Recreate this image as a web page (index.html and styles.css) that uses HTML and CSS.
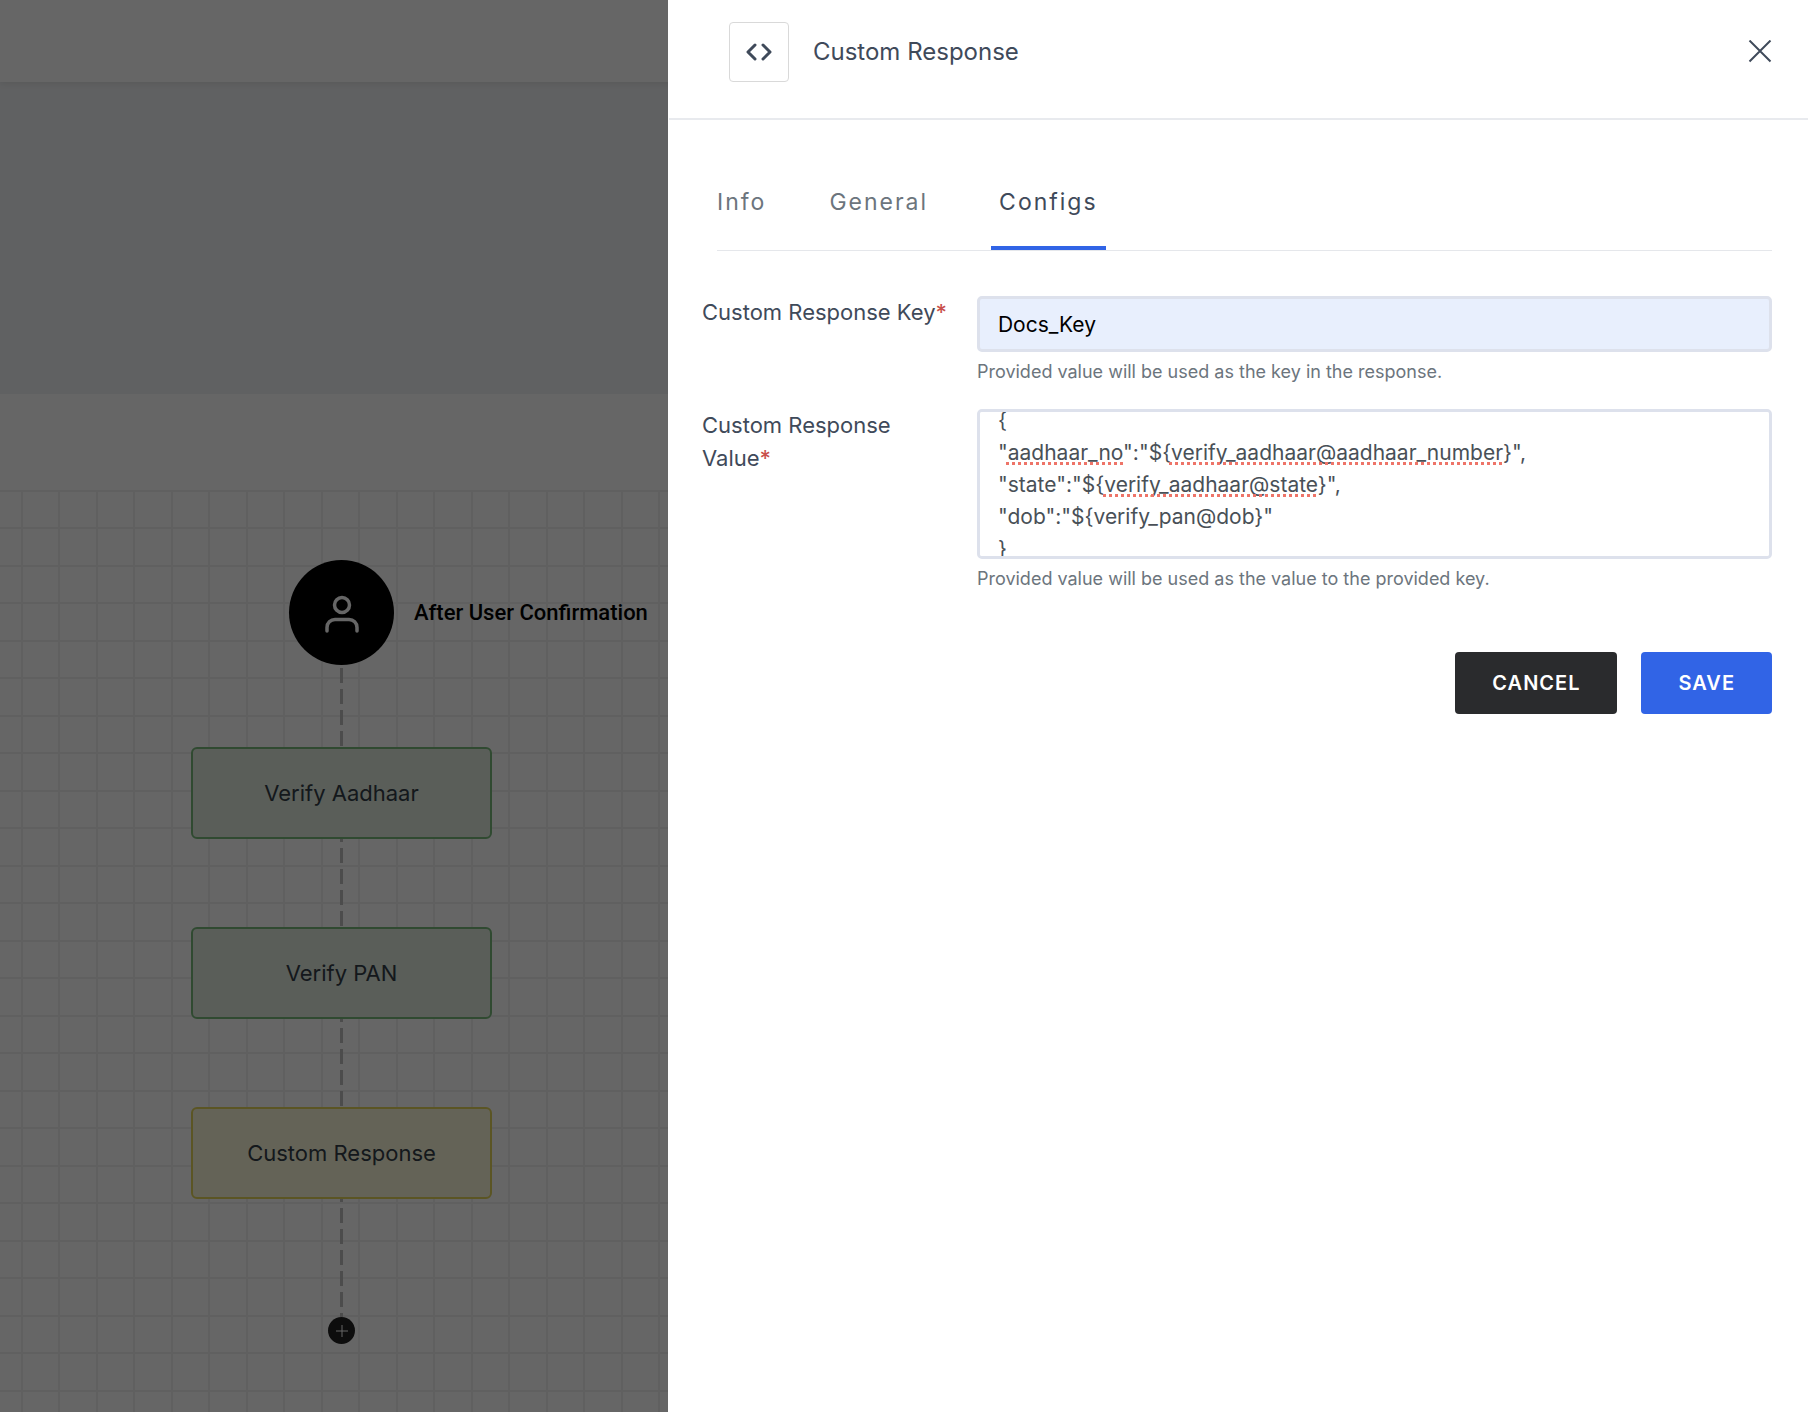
FILE: index.html
```html
<!DOCTYPE html>
<html lang="en">
<head>
<meta charset="utf-8">
<meta name="viewport" content="width=device-width, initial-scale=1">
<title>Custom Response</title>
<link rel="stylesheet" href="styles.css">
</head>
<body>
<div class="page">
  <div class="topbar"></div>
  <div class="banner"></div>
  <div class="toolbar"></div>
  <main class="canvas">
    <div class="flow">
      <div class="start">
        <svg class="start-icon" viewBox="0 0 36 40" aria-hidden="true">
          <circle cx="18" cy="12" r="7.500"/>
          <path d="M3 38v-3.500a8 8 0 0 1 8-8h14a8 8 0 0 1 8 8V38"/>
        </svg>
        <span class="start-label">After User Confirmation</span>
      </div>
      <div class="link link-first"></div>
      <div class="node node-done">Verify Aadhaar</div>
      <div class="link"></div>
      <div class="node node-done">Verify PAN</div>
      <div class="link"></div>
      <div class="node node-current">Custom Response</div>
      <div class="link link-last"></div>
      <button class="add" type="button" aria-label="Add step">
        <svg viewBox="0 0 12 12" aria-hidden="true"><path d="M6 0v12M0 6h12"/></svg>
      </button>
    </div>
  </main>
</div>
<div class="overlay"></div>
<aside class="drawer" role="dialog" aria-labelledby="drawer-title">
  <header class="drawer-header">
    <span class="drawer-icon">
      <svg viewBox="0 0 26 18" aria-hidden="true"><path d="M9 2 2 9l7 7M17 2l7 7-7 7"/></svg>
    </span>
    <h1 class="drawer-title" id="drawer-title">Custom Response</h1>
    <button class="close" type="button" aria-label="Close">
      <svg viewBox="0 0 24 24" aria-hidden="true"><path d="M1.500 0.500l21 21M22.500 0.500l-21 21"/></svg>
    </button>
  </header>
  <nav class="tabs">
    <a class="tab" href="#info">Info</a>
    <a class="tab" href="#general">General</a>
    <a class="tab tab-active" href="#configs" aria-current="page">Configs</a>
  </nav>
  <form class="form">
    <div class="row">
      <label class="label" for="key">Custom Response Key<span class="required">*</span></label>
      <div class="field">
        <input class="control input" id="key" type="text" value="Docs_Key">
        <p class="help">Provided value will be used as the key in the response.</p>
      </div>
    </div>
    <div class="row">
      <label class="label" for="value">Custom Response Value<span class="required">*</span></label>
      <div class="field">
        <div class="editor">
          <textarea class="control textarea" id="value" spellcheck="false">{
"aadhaar_no":"${verify_aadhaar@aadhaar_number}",
"state":"${verify_aadhaar@state}",
"dob":"${verify_pan@dob}"
}</textarea>
          <span class="typo typo-field"></span>
          <span class="typo typo-number"></span>
          <span class="typo typo-state"></span>
        </div>
        <p class="help">Provided value will be used as the value to the provided key.</p>
      </div>
    </div>
    <div class="actions">
      <button class="btn btn-dark" type="button">CANCEL</button>
      <button class="btn btn-primary" type="submit">SAVE</button>
    </div>
  </form>
</aside>
<script src="script.js"></script>
</body>
</html>
```
FILE: styles.css
```css
* { box-sizing: border-box; }

body {
  margin: 0;
  font-family: Inter, "Liberation Sans", sans-serif;
  color: #3f4a5a;
}

/* Workflow page behind the drawer */
.page {
  display: flex;
  flex-direction: column;
  min-height: 100vh;
  background: #fff;
}
.topbar {
  height: 82px;
  box-shadow: 0 2px 6px rgba(0, 0, 0, 0.08);
  z-index: 1;
}
.banner { height: 312px; background: #f0f2f4; }
.toolbar { height: 96px; }
.canvas {
  flex: 1;
  padding: 70px 0 68px 191px;
  background-color: #fff;
  background-image:
    linear-gradient(to right, #f0f0f0 2px, transparent 2px 37px, #f0f0f0 37px 39px, transparent 39px),
    linear-gradient(to bottom, #f0f0f0 2px, transparent 2px 37px, #f0f0f0 37px 39px, transparent 39px);
  background-size: 75px 75px;
  background-position: 21px 0;
}
.flow {
  display: flex;
  flex-direction: column;
  align-items: center;
  width: 301px;
}
.start {
  position: relative;
  display: flex;
  align-items: center;
  justify-content: center;
  width: 105px;
  height: 105px;
  border-radius: 50%;
  background: #000;
}
.start-icon {
  width: 36px;
  height: 40px;
  fill: none;
  stroke: #fff;
  stroke-width: 3.500;
  stroke-linecap: round;
}
.start-label {
  position: absolute;
  left: 125px;
  font: 500 22px/24px Roboto, sans-serif;
  color: #000;
  white-space: nowrap;
}
.link {
  width: 3px;
  height: 88px;
  background: repeating-linear-gradient(to bottom, #bfbfbf 0 3px, transparent 3px 9px, #bfbfbf 9px 21px);
}
.link-first {
  height: 82px;
  background: repeating-linear-gradient(to bottom, transparent 0 3px, #bfbfbf 3px 18px, transparent 18px 21px);
}
.link-last { height: 118px; }
.node {
  display: flex;
  align-items: center;
  justify-content: center;
  width: 301px;
  height: 92px;
  border: 2px solid;
  border-radius: 6px;
  font-size: 22px;
  color: #333d47;
}
.node-done { background: #e0ebde; border-color: #78ba7c; }
.node-current { background: #faf8da; border-color: #e3d55a; }
.add {
  display: flex;
  align-items: center;
  justify-content: center;
  width: 27px;
  height: 27px;
  padding: 0;
  border: 0;
  border-radius: 50%;
  background: #212121;
}
.add svg { width: 12px; height: 12px; stroke: #fff; stroke-width: 1; }

.overlay {
  position: fixed;
  inset: 0;
  z-index: 2;
  background: rgba(0, 0, 0, 0.6);
}

/* Drawer */
.drawer {
  box-sizing: content-box;
  position: fixed;
  top: 0;
  right: 0;
  bottom: 0;
  z-index: 3;
  width: 63%;
  border-left: 1px solid #fff;
  background: #fff;
  overflow-y: auto;
}
.drawer-header {
  display: flex;
  align-items: center;
  gap: 24px;
  padding: 22px 36px 36px 60px;
  border-bottom: 2px solid #e8eaee;
}
.drawer-icon {
  display: flex;
  align-items: center;
  justify-content: center;
  width: 60px;
  height: 60px;
  border: 1px solid #d9d9d9;
  border-radius: 4px;
}
.drawer-icon svg {
  width: 26px;
  height: 18px;
  fill: none;
  stroke: #3f4a5a;
  stroke-width: 3;
  stroke-linecap: round;
  stroke-linejoin: round;
}
.drawer-title { margin: 0; font-size: 24px; line-height: 32px; font-weight: 400; }
.close {
  display: flex;
  margin-left: auto;
  padding: 0;
  border: 0;
  background: none;
}
.close svg { width: 24px; height: 24px; fill: none; stroke: #3f4a5a; stroke-width: 2; }

.tabs {
  display: flex;
  gap: 63px;
  margin: 64px 36px 0 48px;
  border-bottom: 1px solid #e5e7eb;
}
.tab {
  height: 66px;
  font-size: 23px;
  line-height: 36px;
  letter-spacing: 2px;
  color: #6c757d;
  text-decoration: none;
}
.tab-active {
  padding: 0 8px;
  border-bottom: 4px solid #3164e6;
  color: #3f4a5a;
}

.form { padding: 45px 36px 36px 33px; }
.row {
  display: grid;
  grid-template-columns: 251px 1fr;
  column-gap: 24px;
  margin-bottom: 25px;
}
.label { font-size: 22px; line-height: 33px; }
.required { font-weight: 500; color: #c9504c; }
.control {
  display: block;
  width: 100%;
  border: 3px solid #dde1ec;
  border-radius: 5px;
  font: 400 21px/32px Inter, "Liberation Sans", sans-serif;
  outline: 0;
}
.input {
  height: 56px;
  padding: 0 18px;
  background: #e8effd;
  color: #000;
}
.editor { position: relative; }
.textarea {
  height: 150px;
  padding: 12px 18px;
  background: #fff;
  color: #495057;
  resize: none;
  scrollbar-width: none;
}
/* Spell-check marks under unknown words */
.typo {
  position: absolute;
  height: 3px;
  background: repeating-linear-gradient(to right, #ee7468 0 3px, transparent 3px 6px);
}
.typo-field { top: 53px; left: 29px; width: 118px; }
.typo-number { top: 53px; left: 192px; width: 334px; }
.typo-state { top: 85px; left: 126px; width: 216px; }
.help { margin: 7px 0 0; font-size: 18px; line-height: 25px; color: #6c757d; }
.actions {
  display: flex;
  justify-content: flex-end;
  gap: 24px;
  margin-top: 61px;
}
.btn {
  height: 62px;
  padding: 0 37px;
  border: 0;
  border-radius: 4px;
  font: 600 20px/24px Inter, "Liberation Sans", sans-serif;
  letter-spacing: 1px;
  color: #fff;
}
.btn-dark { background: #2a2b2d; }
.btn-primary { background: #3164e6; }
```
FILE: script.js
```js
// Bring the body of the JSON value into view.
document.getElementById("value").scrollTop = 19;
```
